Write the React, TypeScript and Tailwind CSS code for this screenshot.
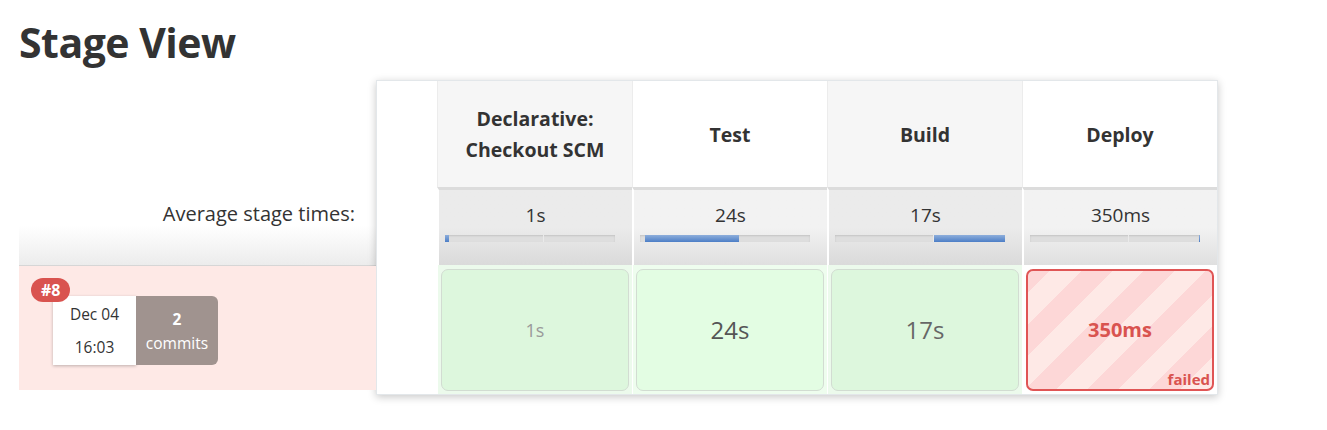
import React from 'react';

type Stage = {
  name: string[];
  avg: string;
  barLeft: number;
  barWidth: number;
  run: string;
  status: 'ok' | 'failed';
  runStyle: string;
};

const stages: Stage[] = [
  { name: ['Declarative:', 'Checkout SCM'], avg: '1s', barLeft: 0, barWidth: 4, run: '1s', status: 'ok', runStyle: 'text-[18px] text-[#9a9a9a]' },
  { name: ['Test'], avg: '24s', barLeft: 5, barWidth: 94, run: '24s', status: 'ok', runStyle: 'text-[24px] text-[#555]' },
  { name: ['Build'], avg: '17s', barLeft: 99, barWidth: 71, run: '17s', status: 'ok', runStyle: 'text-[24px] text-[#666]' },
  { name: ['Deploy'], avg: '350ms', barLeft: 169, barWidth: 1, run: '350ms', status: 'failed', runStyle: 'text-[20px] font-bold text-[#d9534f]' },
];

function ProgressBar({ left, width }: { left: number; width: number }) {
  return (
    <div className="relative ml-[6px] h-[7px] w-[170px] bg-[#dedede] shadow-[inset_0_1px_2px_rgba(0,0,0,0.12)]">
      <div className="absolute top-0 left-[98px] h-full w-px bg-[#eaeaea]" />
      <div
        className="absolute top-0 h-full bg-linear-to-b from-[#8eaedb] to-[#4c7ec6]"
        style={{ left, width }}
      />
    </div>
  );
}

export default function App() {
  return (
    <div className="min-h-[430px] bg-white pl-[19px] pt-[14px] font-['Open_Sans',sans-serif] text-[#333]">
      <h1 className="text-[41px] leading-[56px] font-bold tracking-[-0.5px] text-[#333]">Stage View</h1>

      <div className="mt-[10px] flex">
        {/* left column: labels and build history */}
        <div className="w-[357px] pt-[107px]">
          <div className="flex h-[79px] justify-end border-b border-[#d6d6d6] bg-linear-to-b from-white via-white to-[#ececec] pt-[13px] pr-[21px] text-[20px] leading-[28px] text-[#333]">
            Average stage times:
          </div>
          <div className="relative h-[124px] bg-[#fee9e6]">
            <span className="absolute top-[12px] left-[12px] z-10 rounded-full bg-[#d9534f] px-[10px] text-[16px] leading-[24px] font-bold text-white">
              #8
            </span>
            <div className="absolute top-[30px] left-[34px] flex h-[69px]">
              <div className="flex w-[83px] flex-col items-center justify-center gap-[17px] bg-white text-[15.5px] text-[#333] shadow-[0_1px_3px_rgba(0,0,0,0.25)]">
                <span className="leading-[16px]">Dec 04</span>
                <span className="leading-[16px]">16:03</span>
              </div>
              <div className="flex w-[82px] flex-col items-center justify-center rounded-r-[6px] bg-[#a0938f] text-[15.5px] text-white">
                <span className="leading-[24px] font-bold">2</span>
                <span className="leading-[24px]">commits</span>
              </div>
            </div>
          </div>
        </div>

        {/* stage table */}
        <div className="w-[842px] border border-[#e3e7ea] bg-white shadow-[0_2px_8px_rgba(0,0,0,0.22)]">
          <div className="flex h-[106px]">
            <div className="w-[60px] bg-white" />
            {stages.map((s, i) => (
              <div
                key={s.avg}
                className={`flex w-[195px] flex-col items-center justify-center border-l border-[#ececec] text-[19.5px] leading-[31px] font-bold text-[#333] ${i % 2 === 0 ? 'bg-[#f6f6f6]' : 'bg-white'}`}
              >
                {s.name.map((line) => (
                  <span key={line}>{line}</span>
                ))}
              </div>
            ))}
          </div>

          <div className="flex h-[78px]">
            <div className="w-[60px] bg-white" />
            {stages.map((s, i) => (
              <div
                key={s.avg}
                className={`flex w-[195px] flex-col border-t-[3px] border-l-2 border-t-[#dcdcdc] border-l-white pt-[12px] ${i % 2 === 0 ? 'bg-linear-to-b from-[#ebebeb] via-[#ebebeb] to-[#dadada]' : 'bg-linear-to-b from-[#f2f2f2] via-[#f2f2f2] to-[#dfdfdf]'}`}
              >
                <span className="text-center text-[19px] leading-[26px] text-[#333]">{s.avg}</span>
                <div className="mt-[7px] w-full">
                  <ProgressBar left={s.barLeft} width={s.barWidth} />
                </div>
              </div>
            ))}
          </div>

          <div className="flex h-[129px]">
            <div className="w-[60px] bg-white" />
            {stages.map((s, i) => (
              <div
                key={s.avg}
                className={`w-[195px] border-l border-white px-[3px] pt-[4px] pb-[3px] ${s.status === 'failed' ? 'bg-white' : i % 2 === 0 ? 'bg-[#ecfaec]' : 'bg-[#eefdee]'}`}
              >
                {s.status === 'failed' ? (
                  <div className="relative flex h-full items-center justify-center rounded-[7px] border-2 border-[#e05555] bg-[repeating-linear-gradient(-45deg,#fee9e6_0px,#fee9e6_22px,#fdd7d7_22px,#fdd7d7_44px)]">
                    <span className={s.runStyle}>{s.run}</span>
                    <span className="absolute right-[2px] bottom-[2px] text-[15px] leading-[16px] font-bold text-[#d9534f]">failed</span>
                  </div>
                ) : (
                  <div
                    className={`flex h-full items-center justify-center rounded-[7px] border border-[#d2dcd2] ${i % 2 === 0 ? 'bg-[#ddf7dd]' : 'bg-[#e3fde3]'}`}
                  >
                    <span className={s.runStyle}>{s.run}</span>
                  </div>
                )}
              </div>
            ))}
          </div>
        </div>
      </div>
    </div>
  );
}
